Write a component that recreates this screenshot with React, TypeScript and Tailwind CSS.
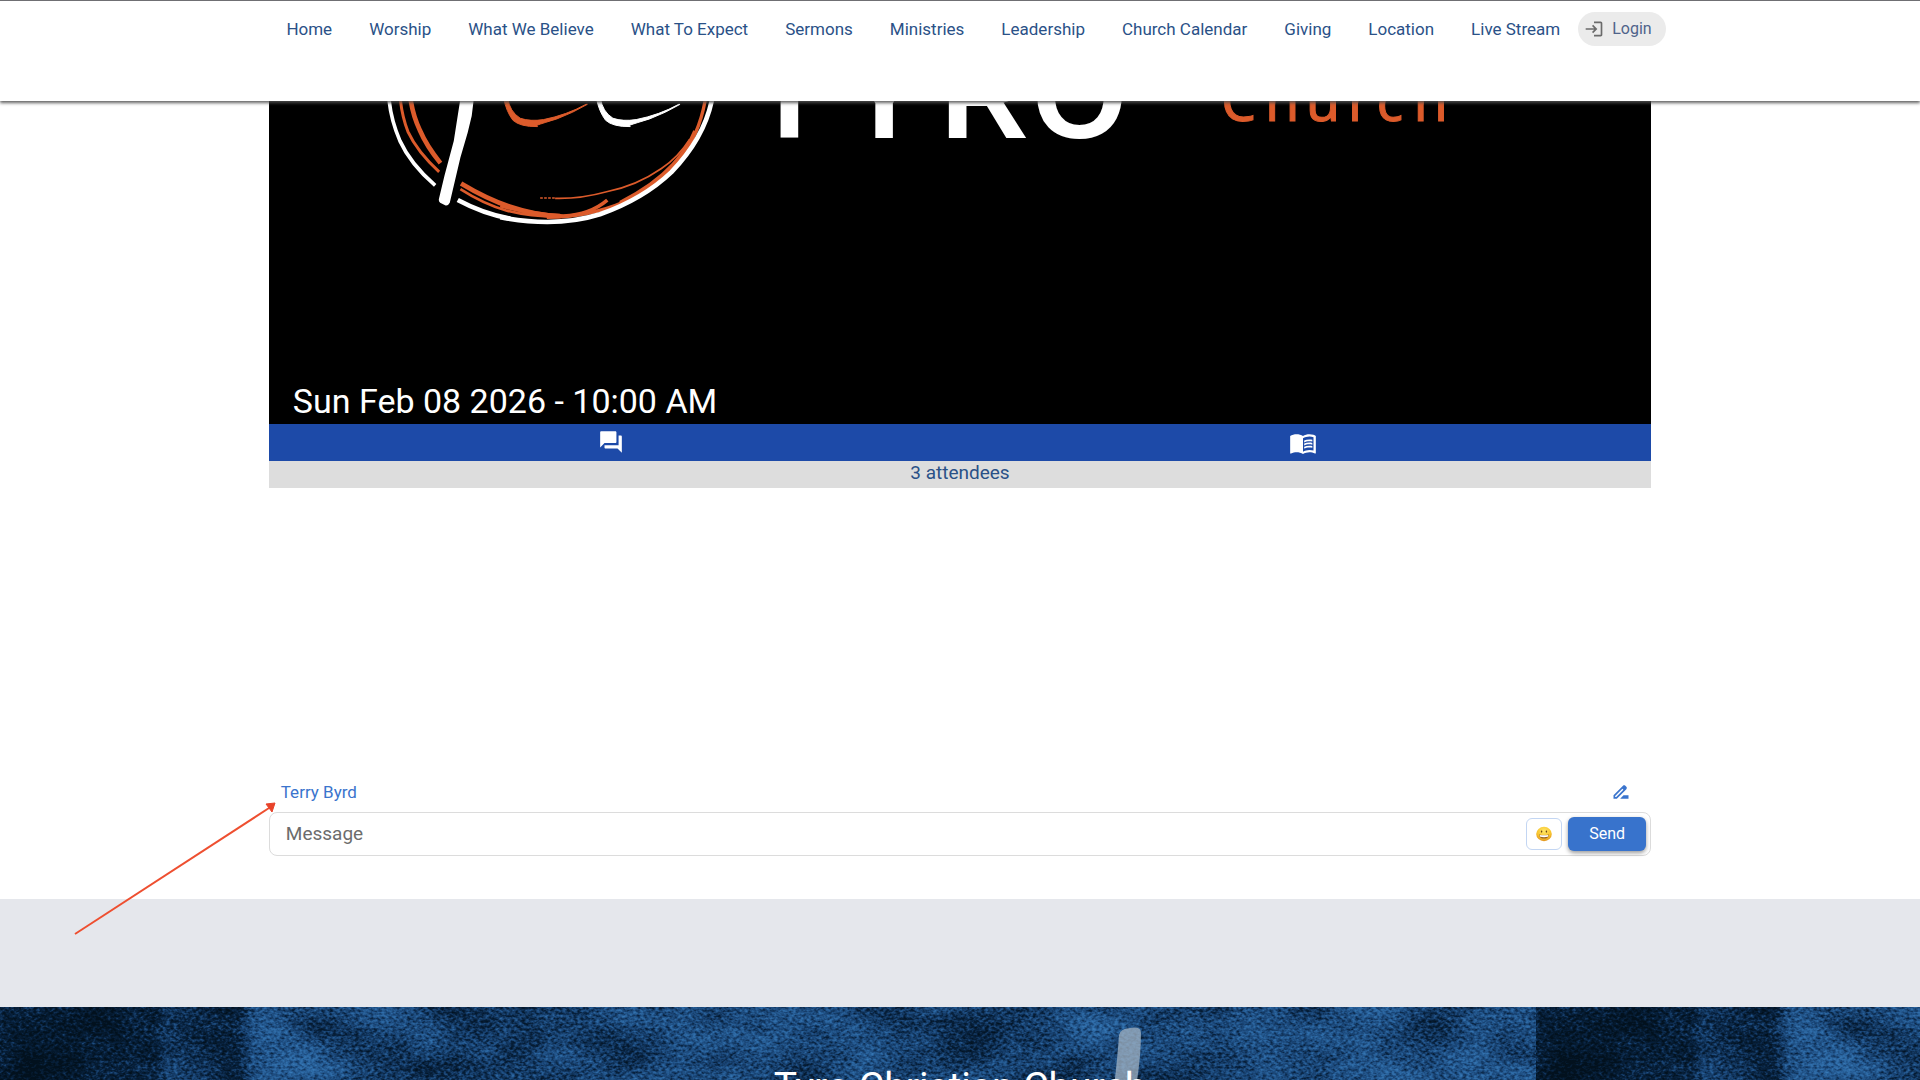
import React from "react";
import { MdLogin, MdForum, MdMenuBook, MdDriveFileRenameOutline } from "react-icons/md";

const LINKS = [
  "Home",
  "Worship",
  "What We Believe",
  "What To Expect",
  "Sermons",
  "Ministries",
  "Leadership",
  "Church Calendar",
  "Giving",
  "Location",
  "Live Stream",
];

function Header() {
  return (
    <header className="relative z-10 flex h-[101px] shrink-0 items-start justify-center border-t border-[#6f6f73] bg-white pt-[11px] pl-8 shadow-[0_2px_3px_0_rgba(80,80,80,0.9)]">
      <nav aria-label="Main" className="flex h-[34px] items-center gap-[37px] whitespace-nowrap">
        {LINKS.map((label) => (
          <a key={label} href="#" className="text-[17px] leading-6 text-[#2a5187]">
            {label}
          </a>
        ))}
      </nav>
      <button
        type="button"
        className="ml-[18px] flex h-[34px] items-center gap-2 rounded-full bg-[#ebebeb] pr-[14px] pl-[6px] text-base text-[#4f638a]"
      >
        <MdLogin className="size-5 text-[#6b6b6b]" />
        Login
      </button>
    </header>
  );
}

function LogoArt() {
  return (
    <svg
      className="block h-full w-full"
      viewBox="268 100 1383 324"
      preserveAspectRatio="xMinYMin meet"
      role="img"
      aria-label="Tyro Christian Church"
    >
      <g transform="translate(360 90) scale(0.33333)" fill="none" strokeLinecap="butt">
        <g stroke="#dc5b2b">
          <path d="M118 10Q122 70 142 122Q170 182 236 243" strokeWidth="9" />
          <path d="M148 10Q155 70 178 118Q198 165 240 217" strokeWidth="14" />
          <path d="M302 278Q380 325 450 348Q530 375 600 376" strokeWidth="14" />
          <path d="M300 295Q370 340 440 360Q510 378 590 378" strokeWidth="8" />
          <path d="M420 345Q520 372 610 376Q690 372 742 328" strokeWidth="11" />
          <path d="M560 380Q690 378 790 335Q900 275 960 205Q1020 130 1038 20" strokeWidth="10" />
          <path d="M780 335Q880 285 940 220Q985 170 1005 120" strokeWidth="9" />
          <path d="M585 323Q660 325 740 303Q830 285 905 233Q955 200 990 145" strokeWidth="5" />
          <path d="M540 322H585" strokeWidth="4" strokeDasharray="8 4" />
        </g>
        <g stroke="#fff">
          <path d="M84 10Q88 80 118 150Q150 220 224 284" strokeWidth="11" />
          <path d="M292 328Q370 370 450 384" strokeWidth="14" />
          <path d="M420 380Q590 412 720 371Q850 325 935 244Q1040 135 1060 10" strokeWidth="14" />
        </g>
        <path d="M302 10H342L334 75L322 125L300 200L268 336Q262 347 254 344L239 336Q233 332 236 322L252 255L280 150Z" fill="#fff" />
        <path d="M430 20Q438 62 458 88Q480 108 532 107L530 103Q550 96 590 84Q640 65 682 40L678 40Q620 72 550 86Q510 92 480 82Q448 62 442 20Z" fill="#dc5b2b" stroke="#dc5b2b" strokeWidth="3" />
        <path d="M709 20Q717 62 737 88Q759 108 811 107L809 103Q829 96 869 84Q919 65 961 40L957 40Q899 72 829 86Q789 92 759 82Q727 62 721 20Z" fill="#fff" stroke="#fff" strokeWidth="3" />
      </g>
      <g fill="#fff" fontFamily="'Liberation Sans', sans-serif" fontWeight="700" fontSize="122" textAnchor="middle">
        <text x="790" y="137">T</text>
        <text x="885" y="137">Y</text>
        <text x="986" y="137">R</text>
        <text x="1081" y="137">O</text>
      </g>
      <text
        x="1223 1267 1308 1350 1379 1416"
        y="120"
        fill="#dc5b2b"
        stroke="#dc5b2b"
        strokeWidth="1"
        fontFamily="'Noto Sans', sans-serif"
        fontSize="56"
      >
        Church
      </text>
    </svg>
  );
}

function Grin() {
  return (
    <svg viewBox="0 0 16 16" className="size-4" aria-hidden="true">
      <defs>
        <radialGradient id="face" cx="50%" cy="30%" r="75%">
          <stop offset="0" stopColor="#ffe768" />
          <stop offset="0.6" stopColor="#f8c42e" />
          <stop offset="1" stopColor="#dd8a1c" />
        </radialGradient>
      </defs>
      <ellipse cx="8" cy="8" rx="7.8" ry="7.2" fill="url(#face)" />
      <ellipse cx="5.6" cy="5.6" rx="0.7" ry="1.1" fill="#6b4712" />
      <ellipse cx="10.4" cy="5.6" rx="0.7" ry="1.1" fill="#6b4712" />
      <path d="M3 8.4Q8 9.4 13 8.4Q12.4 12.6 8 12.6Q3.6 12.6 3 8.4Z" fill="#9a6420" />
      <path d="M3.6 8.9Q8 9.8 12.4 8.9L11.8 10.8Q8 11.5 4.2 10.8Z" fill="#fff" />
    </svg>
  );
}

function Player() {
  return (
    <section aria-label="Live stream">
      <div className="relative h-[323px] overflow-hidden bg-black">
        <LogoArt />
        <p className="absolute bottom-1 left-6 text-[34px] leading-[38px] text-white">Sun Feb 08 2026 - 10:00 AM</p>
      </div>
      <div className="grid h-[37px] grid-cols-2 bg-[#1d4aa8] text-white">
        <button type="button" aria-label="Chat" className="flex items-center justify-center pr-[6px] pb-[2px]">
          <MdForum className="size-[26px]" />
        </button>
        <button type="button" aria-label="Bible" className="flex items-center justify-center pr-[6px]">
          <MdMenuBook className="size-7" />
        </button>
      </div>
      <p className="h-[27px] bg-[#dddddd] text-center text-[19px] leading-6 text-[#2a5187]">3 attendees</p>
    </section>
  );
}

function Chat() {
  return (
    <section aria-label="Chat" className="pt-[292px] pb-[43px]">
      <div className="flex h-8 items-center justify-between pr-5 pb-2 pl-3 text-[#3a74cd]">
        <span className="text-[17px] leading-6">Terry Byrd</span>
        <button type="button" aria-label="Edit name">
          <MdDriveFileRenameOutline className="size-5" />
        </button>
      </div>
      <form
        className="flex h-11 items-center gap-[6px] rounded-lg border border-[#dcdcdc] bg-white pr-1 pl-4"
        onSubmit={(e) => e.preventDefault()}
      >
        <input
          type="text"
          aria-label="Message"
          placeholder="Message"
          className="min-w-0 flex-1 bg-transparent text-[19px] text-[#333] outline-none placeholder:text-[#6c6c6c]"
        />
        <button
          type="button"
          aria-label="Insert emoji"
          className="flex h-8 w-9 items-center justify-center rounded-md border border-[#c3d6f3] bg-white"
        >
          <Grin />
        </button>
        <button
          type="submit"
          className="h-[34px] w-[78px] rounded-md bg-[#3873cc] text-base text-white shadow-[0_2px_4px_rgba(0,0,0,0.4)]"
        >
          Send
        </button>
      </form>
    </section>
  );
}

function Texture() {
  return (
    <svg className="absolute inset-0 h-full w-full" aria-hidden="true">
      <defs>
        <linearGradient id="tone" x1="0" x2="1">
          <stop offset="0" stopColor="#404040" />
          <stop offset="0.06" stopColor="#262626" />
          <stop offset="0.1" stopColor="#2a2a2a" />
          <stop offset="0.108" stopColor="#606060" />
          <stop offset="0.155" stopColor="#484848" />
          <stop offset="0.165" stopColor="#808080" />
          <stop offset="0.32" stopColor="#727272" />
          <stop offset="0.345" stopColor="#505050" />
          <stop offset="0.37" stopColor="#747474" />
          <stop offset="0.5" stopColor="#888888" />
          <stop offset="0.58" stopColor="#747474" />
          <stop offset="0.66" stopColor="#6a6a6a" />
          <stop offset="0.7" stopColor="#808080" />
          <stop offset="0.88" stopColor="#828282" />
          <stop offset="1" stopColor="#7a7a7a" />
        </linearGradient>
        <filter id="grunge" x="0" y="0" width="100%" height="100%" colorInterpolationFilters="sRGB">
          <feTurbulence type="fractalNoise" baseFrequency="0.27 0.37" numOctaves="2" seed="7" result="fineRaw" />
          <feColorMatrix in="fineRaw" values="1 0 0 0 0 1 0 0 0 0 1 0 0 0 0 0 0 0 0 1" result="fine" />
          <feTurbulence type="fractalNoise" baseFrequency="0.012 0.022" numOctaves="4" seed="31" result="coarseRaw" />
          <feColorMatrix in="coarseRaw" values="1 0 0 0 0 1 0 0 0 0 1 0 0 0 0 0 0 0 0 1" result="coarse" />
          <feComposite in="fine" in2="coarse" operator="arithmetic" k2="0.58" k3="0.42" k4="0" result="mix" />
          <feComposite in="SourceGraphic" in2="mix" operator="arithmetic" k2="1" k3="1.6" k4="-0.8" result="sum" />
          <feComponentTransfer in="sum">
            <feFuncR type="table" tableValues="0.01 0.03 0.1 0.17 0.22" />
            <feFuncG type="table" tableValues="0.07 0.13 0.27 0.4 0.48" />
            <feFuncB type="table" tableValues="0.12 0.24 0.46 0.63 0.72" />
          </feComponentTransfer>
        </filter>
      </defs>
      <rect id="tile" width="1536" height="160" fill="url(#tone)" filter="url(#grunge)" />
      <use href="#tile" x="1536" />
      <path d="M1119 28Q1120 22 1130 21Q1141 19 1141 26Q1141 62 1130 110L1110 110Q1117 60 1119 28Z" fill="#a3b4c4" fillOpacity="0.75" />
    </svg>
  );
}

function Footer() {
  return (
    <footer className="relative h-40 shrink-0 overflow-hidden bg-[#123a69]">
      <Texture />
      <h2 className="relative pt-[58px] text-center text-[39px] leading-[44px] text-white">Tyro Christian Church</h2>
    </footer>
  );
}

export default function App() {
  return (
    <div className="relative flex h-screen flex-col overflow-hidden bg-white font-['Roboto',sans-serif]">
      <Header />
      <main className="mx-auto w-[72%] shrink-0">
        <Player />
        <Chat />
      </main>
      <div className="h-[108px] shrink-0 bg-[#e5e7ec]" />
      <Footer />
      <svg
        className="pointer-events-none absolute top-[800px] left-[71px] h-[136px] w-[206px]"
        viewBox="0 0 206 136"
        aria-hidden="true"
      >
        <path d="M4 134L198 8" stroke="#ee4f30" strokeWidth="2" />
        <path d="M204 3L195 4L201 12Z" fill="#e8432a" stroke="#e8432a" />
      </svg>
    </div>
  );
}
